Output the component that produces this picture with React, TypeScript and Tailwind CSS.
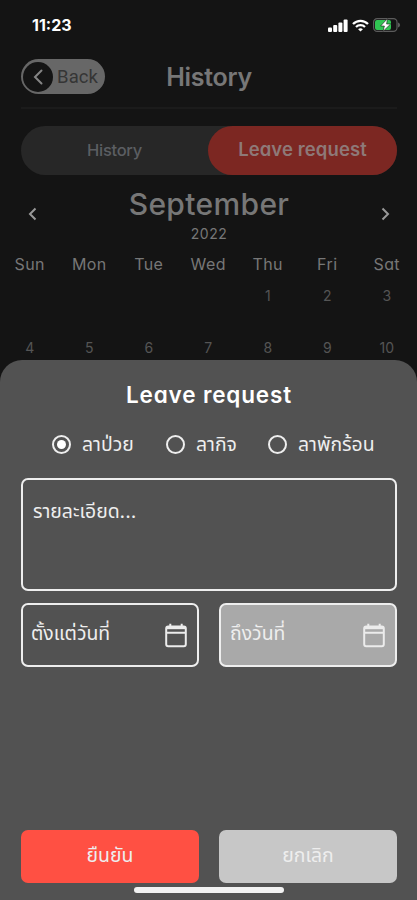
import React, { useState } from 'react'

const DAYS = ['Sun', 'Mon', 'Tue', 'Wed', 'Thu', 'Fri', 'Sat']
const FIRST_WEEK = ['', '', '', '', '1', '2', '3']
const SECOND_WEEK = ['4', '5', '6', '7', '8', '9', '10']

const StatusBar = () => (
    <div className="flex h-[50px] items-center justify-between pl-8 pr-[16px]">
        <span className="font-['Inter'] text-[16px] font-bold leading-5 tracking-[0px] text-white">11:23</span>
        <div className="flex items-center gap-1">
            <svg width="20" height="13" viewBox="0 0 20 13" fill="#fff">
                <rect x="0" y="8.5" width="4" height="4.5" rx="1" />
                <rect x="5.2" y="6" width="4" height="7" rx="1" />
                <rect x="10.4" y="3.5" width="4" height="9.5" rx="1" />
                <rect x="15.6" y="0.5" width="4" height="12.5" rx="1" />
            </svg>
            <svg width="17" height="13" viewBox="0 0 17 13" fill="none" stroke="#fff" strokeWidth="2.3">
                <path d="M1 5C5.2 0.7 11.8 0.7 16 5" />
                <path d="M4 8C6.5 5.6 10.5 5.6 13 8" />
                <path d="M8.5 12.6L6.1 10.2C7.5 8.9 9.5 8.9 10.9 10.2Z" fill="#fff" stroke="none" />
            </svg>
            <svg width="28" height="14" viewBox="0 0 28 14">
                <rect x="0.6" y="0.6" width="23.4" height="12.8" rx="3.6" fill="none" stroke="#5c5c5c" strokeWidth="1.2" />
                <rect x="2" y="2" width="16" height="10" rx="2" fill="#30c552" />
                <path d="M25 4.5C27.8 5.2 27.8 8.8 25 9.5Z" fill="#5c5c5c" />
                <path d="M14.5 0.6L7.6 8H11.4L10 13.4L17.6 6H13.6Z" fill="#fff" stroke="#141414" strokeWidth="0.6" />
            </svg>
        </div>
    </div>
)

const CalendarIcon = () => (
    <svg width="22" height="25" viewBox="0 0 22 25" fill="none" stroke="#ececec" strokeWidth="2">
        <rect x="1.2" y="3.6" width="19.6" height="19.6" rx="2" />
        <path d="M1.2 5H20.8" strokeWidth="2.4" />
        <path d="M1.2 9.8H20.8M5.3 0.8V4M16.7 0.8V4" />
    </svg>
)

type RadioProps = {
    label: string
    checked: boolean
    className: string
    onSelect: () => void
}

const RadioOption = ({ label, checked, className, onSelect }: RadioProps) => (
    <button type="button" role="radio" aria-checked={checked} onClick={onSelect} className={`flex items-center ${className}`}>
        <span className="flex size-[19px] shrink-0 items-center justify-center rounded-full border-2 border-[#eeeeee]">
            {checked && <span className="size-[9px] rounded-full bg-white" />}
        </span>
        <span className="ml-[11px] whitespace-nowrap pb-px">{label}</span>
    </button>
)

export default function App() {
    const [leaveType, setLeaveType] = useState('sick')

    return (
        <div className="flex h-[900px] w-[417px] flex-col overflow-hidden bg-[#141414] font-['Inter','Noto_Sans_Thai',sans-serif] text-[#777777] [font-feature-settings:'cv11']">
            <div className="flex h-[360px] shrink-0 flex-col">
                <StatusBar />

                <header className="ml-[21px] mr-5 grid h-[59px] grid-cols-[1fr_auto_1fr] items-center border-b-2 border-[#1b1b1b] pb-1">
                    <button className="flex h-[35px] w-[84px] items-center rounded-full bg-[#676767] pl-0.5">
                        <span className="flex size-[30px] items-center justify-center rounded-full bg-[#141414]">
                            <svg width="10" height="16" viewBox="0 0 10 16" fill="none" stroke="#858585" strokeWidth="2" strokeLinecap="round">
                                <path d="M8.5 1.5L2 8L8.5 14.5" />
                            </svg>
                        </span>
                        <span className="ml-[4px] font-['Roboto'] text-[18.5px] leading-5 tracking-[0.1px] text-[#353535]">Back</span>
                    </button>
                    <h1 className="text-[25px] font-semibold leading-8 tracking-[-0.3px]">History</h1>
                </header>

                <div className="ml-[21px] mr-5 mt-[17px] flex h-[49px] shrink-0 rounded-full bg-[#272727]">
                    <button className="w-[187px] text-[16.5px] font-medium tracking-[-0.3px] text-[#5b5e62]">History</button>
                    <button className="flex-1 rounded-full bg-[#7c2722] pb-0.5 text-[18.5px] font-semibold tracking-[0.1px] text-[#8e7978]">Leave request</button>
                </div>

                <div className="mt-[11px] flex items-start justify-between pl-7 pr-[27px]">
                    <svg className="mt-[21px]" width="9" height="14" viewBox="0 0 9 14" fill="none" stroke="#999" strokeWidth="2">
                        <path d="M7.5 1.5L2 7L7.5 12.5" />
                    </svg>
                    <div className="text-center">
                        <h2 className="text-[30px] font-medium leading-[36px] tracking-[0.35px]">September</h2>
                        <p className="pt-px text-[14px] leading-[22px] tracking-[0.5px]">2022</p>
                    </div>
                    <svg className="mt-[21px]" width="9" height="14" viewBox="0 0 9 14" fill="none" stroke="#999" strokeWidth="2">
                        <path d="M1.5 1.5L7 7L1.5 12.5" />
                    </svg>
                </div>

                <div className="grid grid-cols-[repeat(7,59.5px)] pt-[7px] text-center text-[16px] leading-6 tracking-[0.4px]">
                    {DAYS.map((day) => (
                        <span key={day}>{day}</span>
                    ))}
                </div>
                <div className="mt-[10px] grid grid-cols-[repeat(7,59.5px)] gap-y-8 text-center text-[14px] leading-5 text-[#555555]">
                    {[...FIRST_WEEK, ...SECOND_WEEK].map((date, i) => (
                        <span key={i}>{date}</span>
                    ))}
                </div>
            </div>

            <section className="flex h-[540px] shrink-0 flex-col rounded-t-[22px] bg-[#525252] pl-[21px] pr-5 pt-[19px] text-[#eeeeee]">
                <h2 className="text-center text-[22.5px] font-semibold leading-8 tracking-[0.85px] text-white">Leave request</h2>

                <div role="radiogroup" className="mt-[18px] flex h-8 items-center pl-[31px] text-[19.4px]">
                    <RadioOption label="ลาป่วย" className="w-[114px]" checked={leaveType === 'sick'} onSelect={() => setLeaveType('sick')} />
                    <RadioOption label="ลากิจ" className="w-[102px]" checked={leaveType === 'personal'} onSelect={() => setLeaveType('personal')} />
                    <RadioOption label="ลาพักร้อน" className="w-[110px]" checked={leaveType === 'vacation'} onSelect={() => setLeaveType('vacation')} />
                </div>

                <div className="mt-[17px] h-[113px] rounded-[7px] border-2 border-[#eeeeee] px-[10px] pt-[17px] text-[19.4px] leading-7">
                    รายละเอียด...
                </div>

                <div className="mt-3 grid grid-cols-2 gap-5 text-[19.4px]">
                    <button className="flex h-16 items-center justify-between rounded-[7px] border-2 border-[#eeeeee] pl-2 pr-[10px]">
                        <span className="pb-0.5">ตั้งแต่วันที่</span>
                        <CalendarIcon />
                    </button>
                    <button className="flex h-16 items-center justify-between rounded-[7px] border-2 border-[#eeeeee] bg-[#a9a9a9] pl-[9px] pr-[10px]">
                        <span className="pb-0.5">ถึงวันที่</span>
                        <CalendarIcon />
                    </button>
                </div>

                <div className="mt-auto grid grid-cols-2 gap-5 text-[19.4px]">
                    <button className="h-[53px] rounded-[7px] bg-[#ff5043] pb-0.5">ยืนยัน</button>
                    <button className="h-[53px] rounded-[7px] bg-[#c7c7c7] pb-0.5">ยกเลิก</button>
                </div>
                <div className="mx-auto mb-[7px] mt-1 h-[6px] w-[150px] shrink-0 rounded-full bg-[#f2f2f2]" />
            </section>
        </div>
    )
}
